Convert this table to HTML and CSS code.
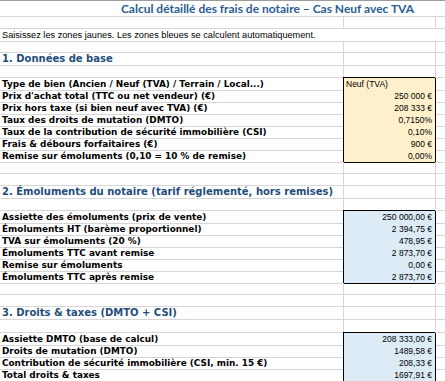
FILE: index.html
```html
<!DOCTYPE html>
<html lang="fr">
<head>
<meta charset="utf-8">
<title>Calcul détaillé des frais de notaire</title>
<link rel="stylesheet" href="styles.css">
</head>
<body>
<div class="sheet">
  <div class="row h-title"><div class="c span title">Calcul détaillé des frais de notaire – Cas Neuf avec TVA</div></div>
  <div class="row"><div class="c"></div><div class="c"></div><div class="c"></div></div>
  <div class="row"><div class="c span note">Saisissez les zones jaunes. Les zones bleues se calculent automatiquement.</div></div>
  <div class="row"><div class="c"></div><div class="c"></div><div class="c"></div></div>
  <div class="row h-head"><div class="c head">1. Données de base</div><div class="c"></div><div class="c"></div></div>
  <div class="row"><div class="c"></div><div class="c"></div><div class="c"></div></div>

  <div class="row"><div class="c lbl">Type de bien (Ancien / Neuf (TVA) / Terrain / Local...)</div><div class="c box in first left-al">Neuf (TVA)</div><div class="c"></div></div>
  <div class="row"><div class="c lbl">Prix d'achat total (TTC ou net vendeur) (€)</div><div class="c box in">250 000 €</div><div class="c"></div></div>
  <div class="row"><div class="c lbl">Prix hors taxe (si bien neuf avec TVA) (€)</div><div class="c box in">208 333 €</div><div class="c"></div></div>
  <div class="row"><div class="c lbl">Taux des droits de mutation (DMTO)</div><div class="c box in">0,7150%</div><div class="c"></div></div>
  <div class="row"><div class="c lbl">Taux de la contribution de sécurité immobilière (CSI)</div><div class="c box in">0,10%</div><div class="c"></div></div>
  <div class="row"><div class="c lbl">Frais &amp; débours forfaitaires (€)</div><div class="c box in">900 €</div><div class="c"></div></div>
  <div class="row"><div class="c lbl">Remise sur émoluments (0,10 = 10 % de remise)</div><div class="c box in">0,00%</div><div class="c"></div></div>

  <div class="row"><div class="c"></div><div class="c"></div><div class="c"></div></div>
  <div class="row"><div class="c"></div><div class="c"></div><div class="c"></div></div>
  <div class="row h-head"><div class="c head">2. Émoluments du notaire (tarif réglementé, hors remises)</div><div class="c"></div><div class="c"></div></div>
  <div class="row"><div class="c"></div><div class="c"></div><div class="c"></div></div>

  <div class="row"><div class="c lbl">Assiette des émoluments (prix de vente)</div><div class="c box out first">250 000,00 €</div><div class="c"></div></div>
  <div class="row"><div class="c lbl">Émoluments HT (barème proportionnel)</div><div class="c box out">2 394,75 €</div><div class="c"></div></div>
  <div class="row"><div class="c lbl">TVA sur émoluments (20 %)</div><div class="c box out">478,95 €</div><div class="c"></div></div>
  <div class="row"><div class="c lbl">Émoluments TTC avant remise</div><div class="c box out">2 873,70 €</div><div class="c"></div></div>
  <div class="row"><div class="c lbl">Remise sur émoluments</div><div class="c box out">0,00 €</div><div class="c"></div></div>
  <div class="row"><div class="c lbl">Émoluments TTC après remise</div><div class="c box out">2 873,70 €</div><div class="c"></div></div>

  <div class="row"><div class="c"></div><div class="c"></div><div class="c"></div></div>
  <div class="row"><div class="c"></div><div class="c"></div><div class="c"></div></div>
  <div class="row h-head"><div class="c head">3. Droits &amp; taxes (DMTO + CSI)</div><div class="c"></div><div class="c"></div></div>
  <div class="row h-head"><div class="c"></div><div class="c"></div><div class="c"></div></div>

  <div class="row"><div class="c lbl">Assiette DMTO (base de calcul)</div><div class="c box out first">208 333,00 €</div><div class="c"></div></div>
  <div class="row"><div class="c lbl">Droits de mutation (DMTO)</div><div class="c box out">1489,58 €</div><div class="c"></div></div>
  <div class="row"><div class="c lbl">Contribution de sécurité immobilière (CSI, min. 15 €)</div><div class="c box out">208,33 €</div><div class="c"></div></div>
  <div class="row"><div class="c lbl">Total droits &amp; taxes</div><div class="c box out">1697,91 €</div><div class="c"></div></div>
</div>
</body>
</html>
```

FILE: styles.css
```css
html, body {
  margin: 0;
  padding: 0;
  background: #fff;
  overflow: hidden;
}

.sheet {
  width: 445px;
  border-top: 1px solid #9c9c9c;
  font-family: "Liberation Sans", Arial, sans-serif;
  color: #000;
}

.row {
  display: grid;
  grid-template-columns: 344px 92px 1fr;
  height: 12px;
}

.row.h-title {
  height: 16px;
}

.row.h-head {
  height: 13px;
}

.c {
  box-sizing: border-box;
  border-right: 1px solid #d6d6d6;
  border-bottom: 1px solid #d6d6d6;
  white-space: nowrap;
  overflow: visible;
  padding: 0 2px;
  font-size: 8.5px;
  line-height: 11px;
}

.c.span {
  grid-column: 1 / -1;
  border-right: none;
}

.row > .c:last-child {
  border-right: none;
}

.title {
  padding-left: 92px;
  text-align: center;
  font-family: Lato, "Liberation Sans", sans-serif;
  font-weight: 700;
  font-size: 12px;
  line-height: 15px;
  color: #2b5d91;
}

.note {
  font-size: 9.2px;
  line-height: 11px;
  padding-top: 1px;
}

.head {
  font-family: "DejaVu Sans", Verdana, sans-serif;
  font-weight: 700;
  font-size: 10px;
  line-height: 12px;
  color: #1f4e79;
}

.lbl {
  font-family: "DejaVu Sans", Verdana, sans-serif;
  font-weight: 700;
  font-size: 8.9px;
  line-height: 11px;
  padding-top: 1px;
}

.box {
  text-align: right;
  padding-right: 3px;
  padding-top: 1px;
  border-right: 1px solid #000;
  border-bottom: 1px solid #000;
  box-shadow: -1px 0 0 0 #000;
}

.box.first {
  box-shadow: -1px -1px 0 0 #000;
}

.box.left-al {
  text-align: left;
  padding-left: 2px;
}

.box.in {
  background: #fff0cc;
}

.box.out {
  background: #ddebf7;
}
```
